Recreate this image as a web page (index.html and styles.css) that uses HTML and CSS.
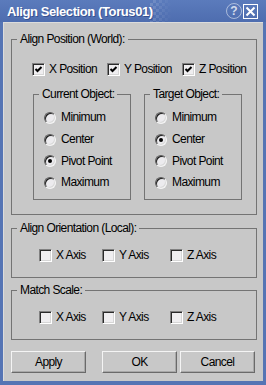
FILE: index.html
```html
<!DOCTYPE html>
<html>
<head>
<meta charset="UTF-8">
<title>Align Selection</title>
<link rel="stylesheet" href="styles.css">
</head>
<body>
<div class="window">
  <div class="titlebar">
    <span class="title">Align Selection (Torus01)</span>
    <span class="checker"></span>
    <span class="tb-buttons">
      <span class="help">?</span>
      <span class="close">
        <svg width="11" height="11" viewBox="0 0 11 11"><path d="M1.5 1.5 L9.5 9.5 M9.5 1.5 L1.5 9.5" stroke="#fff" stroke-width="2" fill="none"/></svg>
      </span>
    </span>
  </div>

  <div class="client">
    <fieldset class="group main">
      <legend>Align Position (World):</legend>
      <div class="check-row">
        <label class="opt"><span class="check on"><svg width="11" height="11" viewBox="0 0 11 11"><path d="M2.5 5 L4.5 7 L8.5 3" stroke="#000" stroke-width="2" fill="none"/></svg></span>X Position</label>
        <label class="opt"><span class="check on"><svg width="11" height="11" viewBox="0 0 11 11"><path d="M2.5 5 L4.5 7 L8.5 3" stroke="#000" stroke-width="2" fill="none"/></svg></span>Y Position</label>
        <label class="opt"><span class="check on"><svg width="11" height="11" viewBox="0 0 11 11"><path d="M2.5 5 L4.5 7 L8.5 3" stroke="#000" stroke-width="2" fill="none"/></svg></span>Z Position</label>
      </div>
      <div class="subgroups">
        <fieldset class="group sub">
          <legend>Current Object:</legend>
          <div class="radio-list">
            <label class="opt"><span class="radio"></span>Minimum</label>
            <label class="opt"><span class="radio"></span>Center</label>
            <label class="opt"><span class="radio on"></span>Pivot Point</label>
            <label class="opt"><span class="radio"></span>Maximum</label>
          </div>
        </fieldset>
        <fieldset class="group sub">
          <legend>Target Object:</legend>
          <div class="radio-list">
            <label class="opt"><span class="radio"></span>Minimum</label>
            <label class="opt"><span class="radio on"></span>Center</label>
            <label class="opt"><span class="radio"></span>Pivot Point</label>
            <label class="opt"><span class="radio"></span>Maximum</label>
          </div>
        </fieldset>
      </div>
    </fieldset>

    <fieldset class="group small orient">
      <legend>Align Orientation (Local):</legend>
      <div class="check-row">
        <label class="opt"><span class="check"></span>X Axis</label>
        <label class="opt"><span class="check"></span>Y Axis</label>
        <label class="opt"><span class="check"></span>Z Axis</label>
      </div>
    </fieldset>

    <fieldset class="group small scale">
      <legend>Match Scale:</legend>
      <div class="check-row">
        <label class="opt"><span class="check"></span>X Axis</label>
        <label class="opt"><span class="check"></span>Y Axis</label>
        <label class="opt"><span class="check"></span>Z Axis</label>
      </div>
    </fieldset>

    <div class="buttons">
      <button class="btn apply">Apply</button>
      <button class="btn ok">OK</button>
      <button class="btn cancel">Cancel</button>
    </div>
  </div>
</div>
</body>
</html>
```

FILE: styles.css
```css
/* Colours */

:root {
    --frame: #5574b4;
    --face: #c8c8c8;
    --line: #747474;
    --light: #f4f4f4;
    --dark: #6a6a6a;
}

* {
    box-sizing: border-box;
}

html, body {
    margin: 0;
    padding: 0;
}

body {
    background: var(--frame);
    font-family: "Liberation Sans", Arial, sans-serif;
    font-size: 12px;
    letter-spacing: -0.6px;
    color: #000;
}

/* Window frame */

.window {
    width: 266px;
    height: 385px;
    background: var(--frame);
    display: flex;
    flex-direction: column;
}

.titlebar {
    height: 22px;
    flex: none;
    display: flex;
    align-items: center;
    padding: 0 8px 0 7px;
    background: linear-gradient(#5b7bbc, #4e6daf);
    color: #fff;
}

.title {
    font-weight: bold;
    font-size: 13px;
    letter-spacing: -0.4px;
    text-shadow: 1px 1px 0 rgba(20, 40, 100, 0.45);
}

.checker {
    width: 22px;
    height: 22px;
    margin-left: -3px;
    background: repeating-conic-gradient(rgba(255, 255, 255, 0.16) 0 25%, transparent 0 50%) 0 0 / 6px 6px;
    -webkit-mask: linear-gradient(90deg, #000, transparent);
    mask: linear-gradient(90deg, #000, transparent);
}

.tb-buttons {
    margin-left: auto;
    display: flex;
    align-items: center;
    gap: 1px;
}

.help {
    width: 16px;
    height: 16px;
    border-radius: 50%;
    border: 1px solid rgba(255, 255, 255, 0.5);
    display: flex;
    align-items: center;
    justify-content: center;
    font-weight: bold;
    font-size: 12px;
    letter-spacing: 0;
    color: rgba(255, 255, 255, 0.75);
}

.close {
    width: 15px;
    height: 15px;
    border: 1px solid #fff;
    display: flex;
    align-items: center;
    justify-content: center;
}

.close svg {
    display: block;
}

/* Client area */

.client {
    flex: 1;
    margin: 0 3px 4px;
    padding: 10px 0 0 8px;
    background: var(--face);
    box-shadow: inset 1px 1px 0 #dcdcdc;
}

/* Group boxes */

.group {
    margin: 0;
    padding: 0;
    min-width: 0;
    border: 1px solid var(--line);
}

.group > legend {
    margin-left: 5px;
    padding: 0 3px;
    line-height: 15px;
}

.main {
    width: 246px;
    height: 183px;
}

.small {
    width: 246px;
    height: 57px;
}

.orient {
    margin-top: 6px;
}

.scale {
    margin-top: 5px;
}

.check-row {
    display: grid;
    height: 13px;
    align-items: center;
}

.main .check-row {
    margin-top: 16px;
    padding-left: 20px;
    grid-template-columns: 75px 75px auto;
}

.small .check-row {
    margin-top: 13px;
    padding-left: 27px;
    grid-template-columns: 63px 68px auto;
}

.opt {
    display: flex;
    align-items: center;
    gap: 4px;
    line-height: 13px;
    white-space: nowrap;
}

/* Sunken check box */

.check {
    width: 13px;
    height: 13px;
    flex: none;
    background: #efeef0;
    border: 1px solid;
    border-color: #808080 #fff #fff #808080;
    box-shadow: inset 1px 1px 0 #2a2a2a, inset -1px -1px 0 #d6d6d6;
}

.check svg {
    display: block;
}

/* Nested groups */

.subgroups {
    display: flex;
    gap: 13px;
    margin-top: 11px;
    padding-left: 21px;
}

.sub {
    width: 98px;
    height: 113px;
}

.radio-list {
    padding: 5px 0 0 10px;
}

.radio-list .opt {
    height: 21.7px;
    gap: 5px;
}

.radio {
    position: relative;
    width: 12px;
    height: 12px;
    flex: none;
    border-radius: 50%;
    background: #ecebee;
    border: 1px solid;
    border-color: #5a5a5a #f4f4f4 #f4f4f4 #5a5a5a;
    box-shadow: inset 1px 1px 0 #1e1e1e, inset -1px -1px 0 #dadada;
}

.radio.on::after {
    content: '';
    position: absolute;
    left: 3px;
    top: 3px;
    width: 4px;
    height: 4px;
    border-radius: 50%;
    background: #000;
}

/* Push buttons */

.buttons {
    display: flex;
    margin-top: 11px;
}

.btn {
    width: 75px;
    height: 22px;
    padding: 0;
    font: inherit;
    letter-spacing: inherit;
    color: #000;
    background: var(--face);
    border: 1px solid;
    border-color: var(--light) var(--dark) var(--dark) var(--light);
    box-shadow: inset -1px -1px 0 #a8a8a8;
}

.ok {
    margin-left: 16px;
}

.cancel {
    margin-left: 3px;
}
```
